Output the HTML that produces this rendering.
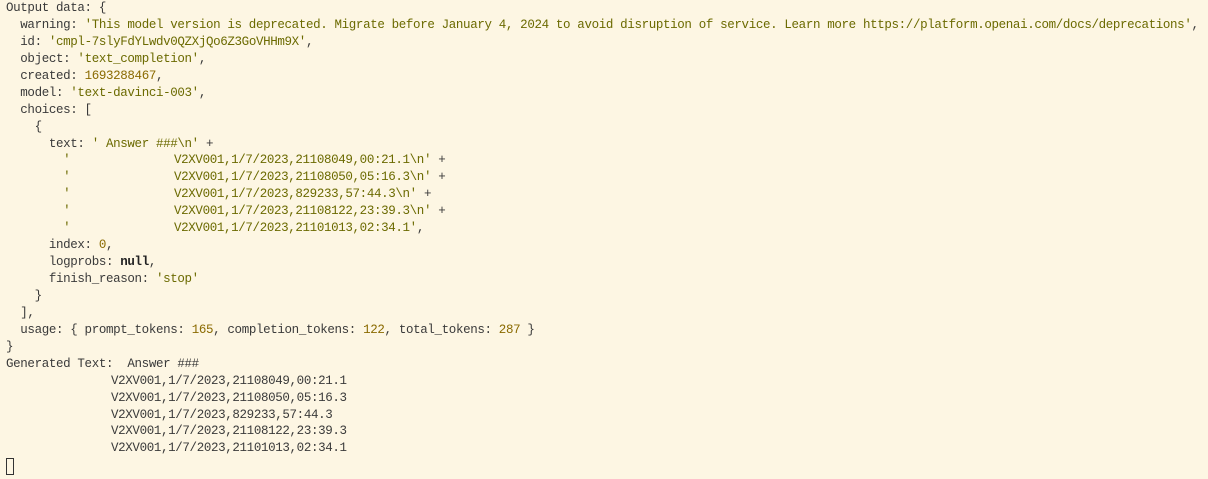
<!DOCTYPE html>
<html><head><style>
html,body{margin:0;padding:0;background:#fdf6e3;width:1208px;height:479px;overflow:hidden}
.c{position:absolute;left:6px;top:0;font-family:"Liberation Mono",monospace;font-size:12.5px;letter-spacing:-0.36px;color:#3a3a3a}
.l{height:16.95px;line-height:16.95px;white-space:pre;position:relative}
.s{color:#6b6a00}.n{color:#8a6a00}.b{font-weight:bold;color:#222}
.t{position:absolute;left:168px;top:0}
.g{position:absolute;left:105px;top:0}
.cur{position:absolute;left:6px;top:458px;width:6px;height:15px;border:1px solid #333}
</style></head><body>
<div class="c">
<div class="l">Output data: {</div>
<div class="l">  warning: <span class="s">'This model version is deprecated. Migrate before January 4, 2024 to avoid disruption of service. Learn more https://platform.openai.com/docs/deprecations'</span>,</div>
<div class="l">  id: <span class="s">'cmpl-7slyFdYLwdv0QZXjQo6Z3GoVHHm9X'</span>,</div>
<div class="l">  object: <span class="s">'text_completion'</span>,</div>
<div class="l">  created: <span class="n">1693288467</span>,</div>
<div class="l">  model: <span class="s">'text-davinci-003'</span>,</div>
<div class="l">  choices: [</div>
<div class="l">    {</div>
<div class="l">      text: <span class="s">' Answer ###\n'</span> +</div>
<div class="l">        <span class="s">'</span><span class="t"><span class="s">V2XV001,1/7/2023,21108049,00:21.1\n'</span> +</span></div>
<div class="l">        <span class="s">'</span><span class="t"><span class="s">V2XV001,1/7/2023,21108050,05:16.3\n'</span> +</span></div>
<div class="l">        <span class="s">'</span><span class="t"><span class="s">V2XV001,1/7/2023,829233,57:44.3\n'</span> +</span></div>
<div class="l">        <span class="s">'</span><span class="t"><span class="s">V2XV001,1/7/2023,21108122,23:39.3\n'</span> +</span></div>
<div class="l">        <span class="s">'</span><span class="t"><span class="s">V2XV001,1/7/2023,21101013,02:34.1'</span>,</span></div>
<div class="l">      index: <span class="n">0</span>,</div>
<div class="l">      logprobs: <span class="b">null</span>,</div>
<div class="l">      finish_reason: <span class="s">'stop'</span></div>
<div class="l">    }</div>
<div class="l">  ],</div>
<div class="l">  usage: { prompt_tokens: <span class="n">165</span>, completion_tokens: <span class="n">122</span>, total_tokens: <span class="n">287</span> }</div>
<div class="l">}</div>
<div class="l">Generated Text:  Answer ###</div>
<div class="l"><span class="g">V2XV001,1/7/2023,21108049,00:21.1</span></div>
<div class="l"><span class="g">V2XV001,1/7/2023,21108050,05:16.3</span></div>
<div class="l"><span class="g">V2XV001,1/7/2023,829233,57:44.3</span></div>
<div class="l"><span class="g">V2XV001,1/7/2023,21108122,23:39.3</span></div>
<div class="l"><span class="g">V2XV001,1/7/2023,21101013,02:34.1</span></div>
</div>
<div class="cur"></div>
</body></html>
